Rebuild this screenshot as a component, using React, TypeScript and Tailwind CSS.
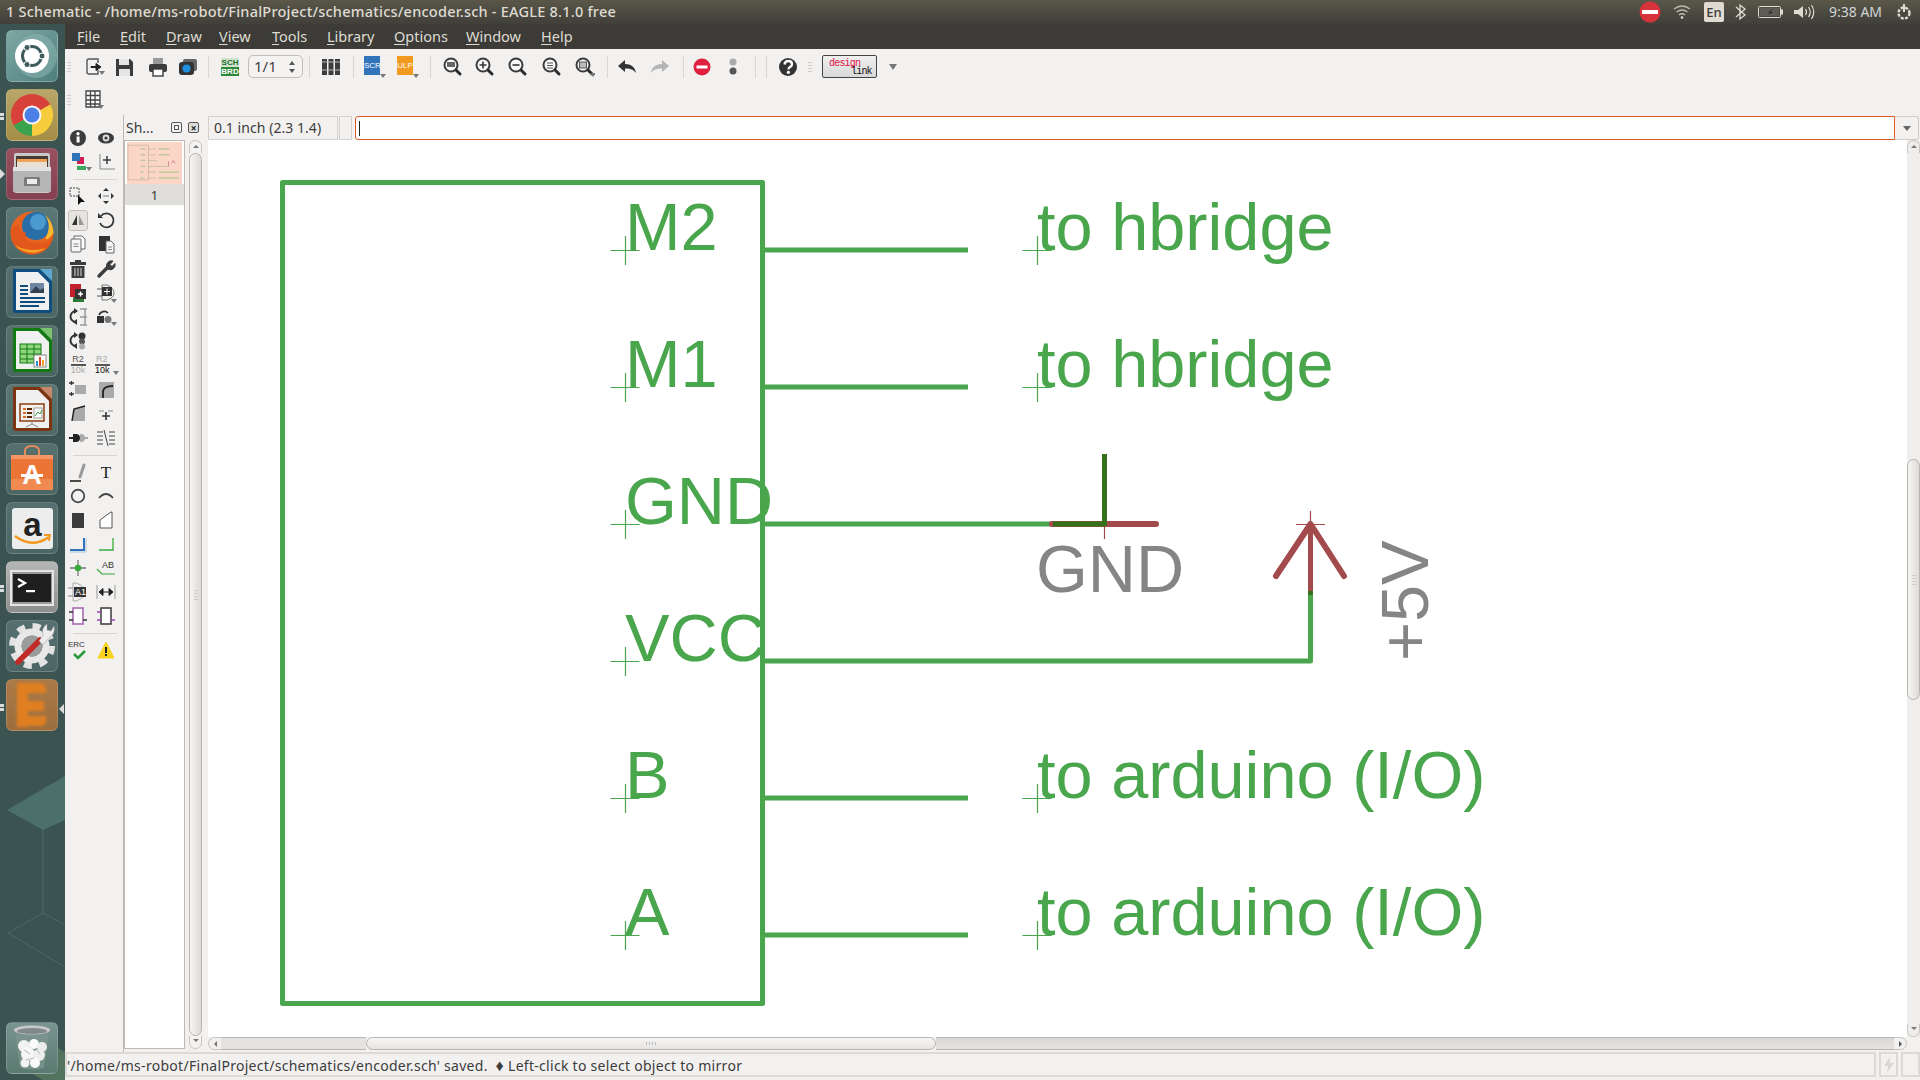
import React from "react";

const FONT = "font-['Noto_Sans','Open_Sans',sans-serif]";

function Tile({ c, children }: { c: string; children?: React.ReactNode }) {
  return (
    <div className={`relative z-10 w-[52px] h-[52px] shrink-0 rounded-[6px] border border-white/15 overflow-hidden ${c}`}>
      <svg viewBox="0 0 52 52" className="absolute -left-px -top-px w-[52px] h-[52px]">
        {children}
      </svg>
    </div>
  );
}

function Notch({ c }: { c: string }) {
  return (
    <div className={`absolute left-0 flex flex-col gap-[1px] ${c}`}>
      <div className="w-[4px] h-[3px] bg-[#dcdcdc]" />
      <div className="w-[4px] h-[3px] bg-[#dcdcdc]" />
    </div>
  );
}

function Launcher() {
  return (
    <div className="relative w-[65px] shrink-0 flex flex-col items-start gap-[7px] pl-[6px] pt-[6px] pb-[6px] bg-[#3b5452] overflow-hidden">
      <svg viewBox="0 0 65 1056" className="absolute left-0 top-0 w-[65px] h-[1056px]">
        <polygon points="7,786 43,806 65,796 65,752" fill="#4a7069" />
        <path d="M43 806V889M8 909L43 889L65 901M8 909L65 943" stroke="#4a6b64" fill="none" strokeWidth="1" />
        <polygon points="8,1036 43,1016 65,1028 65,1056 43,1056" fill="#52745f" />
      </svg>
      <div className="absolute left-0 top-[145px] w-0 h-0 border-y-[5px] border-y-transparent border-l-[5px] border-l-[#dcdcdc]" />
      <Tile c="bg-linear-to-br from-[#7fa8a6] to-[#4d7f7d]">
        <ellipse cx="30" cy="26" rx="21" ry="22" fill="#8fb8b6" opacity=".5" />
        <circle cx="26" cy="26" r="17" fill="#fff" />
        <circle cx="26" cy="26" r="9.5" fill="none" stroke="#3d5c5c" strokeWidth="3" />
        <circle cx="36" cy="26" r="3" fill="#3d5c5c" stroke="#fff" />
        <circle cx="21" cy="17.5" r="3" fill="#3d5c5c" stroke="#fff" />
        <circle cx="21" cy="34.5" r="3" fill="#3d5c5c" stroke="#fff" />
      </Tile>
      <Tile c="bg-linear-to-b from-[#b9a66a] to-[#a48e45]">
        <path d="M26 26L7.8 36.5A21 21 0 0 1 44.2 15.5Z" fill="#d7413a" />
        <path d="M26 26L44.2 15.5A21 21 0 0 1 26 47Z" fill="#f7cc3c" />
        <path d="M26 26L26 47A21 21 0 0 1 7.8 36.5Z" fill="#3aa34e" />
        <circle cx="26" cy="26" r="9.5" fill="#f5f5f5" />
        <circle cx="26" cy="26" r="7.5" fill="#4a80e8" />
      </Tile>
      <Tile c="bg-linear-to-b from-[#98505f] to-[#85404f]">
        <rect x="8" y="5" width="36" height="40" rx="2" fill="#c9c9c9" />
        <rect x="10" y="8" width="32" height="11" fill="#4a3a34" />
        <rect x="11" y="11" width="30" height="3" fill="#f2a35a" />
        <rect x="11" y="14" width="30" height="5" fill="#e8e0d0" />
        <rect x="7" y="19" width="38" height="25" rx="1" fill="#b5b5b5" />
        <rect x="7" y="19" width="38" height="4" fill="#e2e2e2" />
        <rect x="18" y="29" width="16" height="9" rx="1" fill="#7b7b7b" />
        <rect x="21" y="31" width="10" height="5" fill="#ececec" />
      </Tile>
      <Tile c="bg-linear-to-b from-[#5b7776] to-[#4d6867]">
        <circle cx="26" cy="26" r="21.5" fill="#e8651f" />
        <circle cx="30" cy="19" r="14" fill="#2a6ea8" />
        <circle cx="32" cy="15" r="8" fill="#4a9ad0" />
        <path d="M5 24C4 36 14 48 27 47.5C39 47 47 38 47.5 26C46 34 39 37 33 36C24 36 17 32 20 25C15 27 12 22 14 17C10 18 6 20 5 24Z" fill="#e2571b" />
        <path d="M47.5 26C47 18 44 12 39 8C43 14 44 20 41 28C37 34 42 34 47.5 26Z" fill="#f7b92f" />
        <path d="M9 38C16 46 30 49 40 41C30 44 18 44 9 38Z" fill="#f6a623" />
      </Tile>
      <Tile c="bg-linear-to-b from-[#55706f] to-[#4a6665]">
        <path d="M7 3H34L46 15V44Q46 47 43 47H10Q7 47 7 44Z" fill="#0f4d7d" />
        <path d="M34 3H46V15Z" fill="#5da6cf" />
        <path d="M10 6H32L43 17V44H10Z" fill="#f0f0f0" />
        <rect x="14" y="19" width="8" height="2" fill="#0f4d7d" />
        <rect x="14" y="23" width="8" height="2" fill="#0f4d7d" />
        <rect x="14" y="27" width="8" height="2" fill="#0f4d7d" />
        <rect x="24" y="17" width="14" height="10" fill="#6f86a5" />
        <path d="M24 27L30 20L34 24L38 22V27Z" fill="#33424f" />
        <rect x="14" y="31" width="25" height="2" fill="#0f4d7d" />
        <rect x="14" y="35" width="25" height="2" fill="#0f4d7d" />
        <rect x="14" y="39" width="19" height="2" fill="#0f4d7d" />
      </Tile>
      <Tile c="bg-linear-to-b from-[#56726d] to-[#4a6660]">
        <path d="M7 3H34L46 15V44Q46 47 43 47H10Q7 47 7 44Z" fill="#127a12" />
        <path d="M34 3H46V15Z" fill="#7cc36f" />
        <path d="M10 6H32L43 17V44H10Z" fill="#f0f0f0" />
        <rect x="14" y="19" width="21" height="19" fill="#8fd67e" stroke="#127a12" />
        <path d="M14 24H35M14 29H35M14 34H35M21 19V38M28 19V38" stroke="#127a12" fill="none" />
        <rect x="28" y="30" width="12" height="12" fill="#fff" stroke="#888" />
        <rect x="30" y="36" width="2" height="5" fill="#2a8fd6" />
        <rect x="33" y="32" width="2" height="9" fill="#d64a2a" />
        <rect x="36" y="35" width="2" height="6" fill="#f2a32a" />
      </Tile>
      <Tile c="bg-linear-to-b from-[#5b7672] to-[#4e6b67]">
        <path d="M7 3H34L46 15V44Q46 47 43 47H10Q7 47 7 44Z" fill="#7c3411" />
        <path d="M34 3H46V15Z" fill="#c7876a" />
        <path d="M10 6H32L43 17V44H10Z" fill="#f0f0f0" />
        <rect x="14" y="20" width="24" height="17" fill="#f5f0e8" stroke="#8a3d14" strokeWidth="1.5" />
        <rect x="17" y="24" width="3" height="2" fill="#d8692a" />
        <rect x="17" y="28" width="3" height="2" fill="#d8692a" />
        <rect x="17" y="32" width="3" height="2" fill="#d8692a" />
        <rect x="21" y="24" width="5" height="2" fill="#5a2a10" />
        <rect x="21" y="28" width="5" height="2" fill="#5a2a10" />
        <rect x="21" y="32" width="5" height="2" fill="#5a2a10" />
        <rect x="28" y="24" width="8" height="10" fill="#fff" stroke="#777" strokeWidth=".7" />
        <path d="M29 32L32 28L34 30L36 26" stroke="#3a9a3a" fill="none" />
        <path d="M26 37V40M26 40L20 43M26 40L32 43" stroke="#888" fill="none" />
      </Tile>
      <Tile c="bg-linear-to-b from-[#56706e] to-[#4c6664]">
        <path d="M19 12V8Q19 3 26 3Q33 3 33 8V12" stroke="#e88a5a" strokeWidth="2" fill="none" />
        <path d="M5 12H47V47H5Z" fill="#ec7434" />
        <path d="M5 12H47V16H5Z" fill="#f59665" />
        <rect x="5" y="36" width="42" height="11" fill="#f08a50" />
        <text x="26" y="41" textAnchor="middle" fontSize="27" fontWeight="700" fontFamily="'Liberation Sans',sans-serif" fill="#fff">A</text>
        <rect x="15" y="31" width="22" height="3" fill="#fff" />
      </Tile>
      <Tile c="bg-linear-to-b from-[#56706f] to-[#4b6665]">
        <rect x="6" y="6" width="41" height="41" rx="3" fill="#ededed" />
        <text x="26.5" y="34" textAnchor="middle" fontSize="33" fontWeight="700" fontFamily="'Liberation Sans',sans-serif" fill="#222">a</text>
        <path d="M9 34Q26 47 43 35" stroke="#f29a1f" strokeWidth="2.6" fill="none" />
        <path d="M38 33L44 33L43 39" stroke="#f29a1f" strokeWidth="1.8" fill="none" />
      </Tile>
      <Tile c="bg-linear-to-b from-[#b5b7b6] to-[#8d8f8e]">
        <rect x="4" y="9" width="44" height="36" fill="#e5e5e5" />
        <rect x="6" y="11" width="40" height="32" fill="#9a9a9a" />
        <rect x="7" y="13" width="38" height="28" fill="#1f1f1f" />
        <path d="M12 18L19 22L12 26" stroke="#fff" strokeWidth="2.2" fill="none" />
        <rect x="20" y="29" width="9" height="2.2" fill="#fff" />
      </Tile>
      <Tile c="bg-linear-to-b from-[#56706f] to-[#4b6665]">
        <circle cx="26" cy="26" r="20" fill="none" stroke="#e2e2e2" strokeWidth="6" strokeDasharray="8 7.7" />
        <circle cx="26" cy="26" r="14" fill="none" stroke="#e8e8e8" strokeWidth="7" />
        <circle cx="26" cy="26" r="10.5" fill="#9a9c9b" />
        <path d="M12 42L34 20" stroke="#c22a2a" strokeWidth="5.5" strokeLinecap="round" />
        <path d="M33 21L37 15Q35 8 41 4L41 10L45 11L48 6Q50 14 42 19L37 25Z" fill="#ececec" stroke="#999" strokeWidth=".5" />
      </Tile>
      <Tile c="bg-linear-to-b from-[#ab7a47] to-[#9c6e3d]">
        <g className="blur-[1.5px]" fill="#e07f22">
          <rect x="11" y="4" width="11" height="44" />
          <path d="M11 4H34Q40 4 40 11V14H11Z" />
          <rect x="21" y="22" width="17" height="10" />
          <path d="M11 37H40V42Q40 47 34 47H11Z" />
        </g>
      </Tile>
      <div className="absolute left-[59px] top-[680px] w-0 h-0 border-y-[5px] border-y-transparent border-r-[5px] border-r-[#dcdcdc]" />
      <Notch c="top-[89px]" />
      <Notch c="top-[561px]" />
      <Notch c="top-[680px]" />
      <div className="mt-auto">
        <Tile c="bg-linear-to-b from-[#7a9490] to-[#5a7a70]">
          <path d="M9 9L14 46Q26 49 38 46L43 9Z" fill="#7f9591" opacity=".7" />
          <ellipse cx="26" cy="8" rx="18" ry="4.5" fill="#c8c8c8" />
          <ellipse cx="26" cy="9" rx="15" ry="3" fill="#808a88" />
          <circle cx="18" cy="24" r="6" fill="#f2f2f2" />
          <circle cx="28" cy="22" r="5" fill="#fafafa" />
          <circle cx="36" cy="25" r="5" fill="#ececec" />
          <circle cx="22" cy="32" r="7" fill="#f6f6f6" />
          <circle cx="33" cy="33" r="6" fill="#eee" />
          <circle cx="19" cy="41" r="4.5" fill="#f2f2f2" />
          <circle cx="29" cy="41" r="5" fill="#fafafa" />
          <path d="M18 28L24 32M30 26L34 32M20 38L28 36" stroke="#b5b5b5" fill="none" />
        </Tile>
      </div>
    </div>
  );
}

function Ic({ c = "", w = 22, h = 22, children }: { c?: string; w?: number; h?: number; children?: React.ReactNode }) {
  return (
    <svg viewBox={`0 0 ${w} ${h}`} width={w} height={h} className={`shrink-0 ${c}`}>
      {children}
    </svg>
  );
}

const Tri = ({ x = 16, y = 17 }: { x?: number; y?: number }) => <path d={`M${x} ${y}h6l-3 4z`} fill="#777" />;

function Grip({ c = "" }: { c?: string }) {
  return (
    <div className={`w-[4px] shrink-0 flex flex-col gap-[2px] ${c}`}>
      <div className="h-px bg-[#cfcdca]" />
      <div className="h-px bg-[#cfcdca]" />
      <div className="h-px bg-[#cfcdca]" />
      <div className="h-px bg-[#cfcdca]" />
    </div>
  );
}

function Sep({ c = "" }: { c?: string }) {
  return <div className={`w-px h-[22px] shrink-0 bg-[#d8d6d3] ${c}`} />;
}

function Zoom({ c = "", mark, tri }: { c?: string; mark: React.ReactNode; tri?: boolean }) {
  return (
    <Ic c={c}>
      <circle cx="10" cy="9" r="6.5" fill="#f8f8f8" stroke="#3c3c3c" strokeWidth="2" />
      <path d="M15 14l4 4" stroke="#2b2b2b" strokeWidth="3" strokeLinecap="round" />
      {mark}
      {tri && <path d="M17 17h6l-3 4z" fill="#777" />}
    </Ic>
  );
}

function Toolbar() {
  return (
    <div className="h-[35px] shrink-0 flex items-center pl-[2px]">
      <Grip />
      <Ic c="ml-[13px]">
        <path d="M5 3H14V7M5 3Q3 3 3 5V16Q3 18 5 18H14V14" stroke="#555" fill="none" strokeWidth="1.4" />
        <path d="M7 10.5H12V7.5L17 11L12 14.5V11.5H7Z" fill="#222" stroke="#222" />
        <Tri x={15} y={15} />
      </Ic>
      <Ic c="ml-[7px]">
        <path d="M3 3H17L20 6V20H3Z" fill="#3c3c3c" />
        <rect x="6" y="3" width="10" height="6" fill="#e5e5e5" />
        <rect x="6" y="13" width="11" height="7" fill="#e5e5e5" />
      </Ic>
      <Ic c="ml-[12px]">
        <rect x="6" y="2" width="10" height="6" fill="#999" />
        <rect x="2" y="8" width="18" height="8" rx="2" fill="#3c3c3c" />
        <rect x="6" y="13" width="10" height="7" fill="#fff" stroke="#3c3c3c" strokeWidth="1.4" />
      </Ic>
      <Ic c="ml-[8px]">
        <rect x="6" y="3" width="14" height="12" rx="2" fill="#666" />
        <rect x="2" y="6" width="15" height="13" rx="3" fill="#333" />
        <circle cx="9.5" cy="12.5" r="4" fill="#1f8fe0" />
      </Ic>
      <Sep c="ml-[9px]" />
      <div className="ml-[10px] w-[22px] h-[22px] shrink-0 flex flex-col items-center justify-center">
        <div className="w-[18px] h-[9px] bg-[#cfe3cf] text-[8px] leading-[9px] text-center font-bold text-[#1c6e2a] font-['Liberation_Sans',sans-serif]">SCH</div>
        <div className="w-[18px] h-[9px] bg-[#2d8a3a] text-[8px] leading-[9px] text-center font-bold text-white font-['Liberation_Sans',sans-serif]">BRD</div>
      </div>
      <div className="ml-[7px] w-[55px] h-[23px] shrink-0 relative rounded-[5px] border border-[#c2bfba] bg-[#f4f3f2] text-[15px] leading-[21px] pl-[5px] text-[#444]">
        1/1
        <span className="absolute right-[7px] top-[5px] border-x-[3px] border-x-transparent border-b-[4px] border-b-[#555]" />
        <span className="absolute right-[7px] bottom-[4px] border-x-[3px] border-x-transparent border-t-[4px] border-t-[#555]" />
      </div>
      <Sep c="ml-[6px]" />
      <Ic c="ml-[10px]">
        <rect x="2" y="3" width="5" height="16" fill="#3c3c3c" />
        <rect x="8.5" y="3" width="5" height="16" fill="#3c3c3c" />
        <rect x="15" y="3" width="5" height="16" fill="#3c3c3c" />
        <path d="M2 6h18M2 14h18" stroke="#bbb" />
      </Ic>
      <Sep c="ml-[11px]" />
      <div className="ml-[10px] relative w-[22px] h-[22px] shrink-0">
        <div className="w-[16px] h-[19px] bg-[#3274ba] text-[8px] leading-[19px] text-white text-center font-['Liberation_Sans',sans-serif]">SCR</div>
        <span className="absolute right-0 bottom-0 border-x-[3px] border-x-transparent border-t-[4px] border-t-[#777]" />
      </div>
      <div className="ml-[11px] relative w-[22px] h-[22px] shrink-0">
        <div className="w-[16px] h-[19px] bg-[#f29a1f] text-[8px] leading-[19px] text-white text-center font-['Liberation_Sans',sans-serif]">ULP</div>
        <span className="absolute right-0 bottom-0 border-x-[3px] border-x-transparent border-t-[4px] border-t-[#777]" />
      </div>
      <Sep c="ml-[11px]" />
      <Zoom c="ml-[10px]" mark={<rect x="6" y="6" width="8" height="5" fill="#666" />} />
      <Zoom c="ml-[10px]" mark={<path d="M6.5 9h7M10 5.5v7" stroke="#333" strokeWidth="1.6" />} />
      <Zoom c="ml-[11px]" mark={<path d="M6.5 9h7" stroke="#333" strokeWidth="1.6" />} />
      <Zoom c="ml-[12px]" mark={<path d="M7 7h6M7 9.5h6M7 12h6" stroke="#555" strokeWidth="1.1" />} />
      <Zoom c="ml-[11px]" tri mark={<rect x="6.5" y="6" width="7" height="6" fill="#bbb" stroke="#555" />} />
      <Sep c="ml-[12px]" />
      <Ic c="ml-[8px]">
        <path d="M2 10L9 4V8C15 8 19 11 20 17C17 13 13 12.5 9 12.5V16Z" fill="#333" />
      </Ic>
      <Ic c="ml-[11px]">
        <path d="M20 10L13 4V8C7 8 3 11 2 17C5 13 9 12.5 13 12.5V16Z" fill="#b5b5b5" />
      </Ic>
      <Sep c="ml-[12px]" />
      <Ic c="ml-[7px]">
        <circle cx="11" cy="11" r="8.5" fill="#e0203f" />
        <rect x="5.5" y="9.5" width="11" height="3" fill="#fff" />
      </Ic>
      <Ic c="ml-[9px]">
        <circle cx="11" cy="6" r="3.5" fill="#aaa" />
        <circle cx="11" cy="15" r="3.5" fill="#555" />
      </Ic>
      <Sep c="ml-[11px]" />
      <Sep c="ml-[10px]" />
      <Ic c="ml-[10px]">
        <circle cx="11" cy="11" r="9" fill="#333" />
        <path d="M7.5 8.5Q8 5 11.3 5Q15 5 15 8.2Q15 10 12.6 11.2Q11.5 11.8 11.5 13.5" stroke="#fff" strokeWidth="2.4" fill="none" />
        <circle cx="11.4" cy="16.3" r="1.6" fill="#fff" />
      </Ic>
      <Grip c="ml-[9px]" />
      <div className="ml-[10px] relative w-[55px] h-[23px] shrink-0 rounded-[2px] border border-[#444] bg-linear-to-b from-[#f0f0f0] to-[#d8d8d8] font-['Liberation_Mono',monospace] text-[10px] leading-none">
        <span className="absolute left-[6px] top-[3px] text-[#e0103f] tracking-[-0.8px]">design</span>
        <span className="absolute left-[28px] top-[11px] text-[#111] tracking-[-0.8px]">link</span>
      </div>
      <div className="ml-[12px] w-0 h-0 border-x-[4px] border-x-transparent border-t-[6px] border-t-[#777]" />
    </div>
  );
}

function Tool({ children }: { children?: React.ReactNode }) {
  return <div className="flex items-center justify-center h-full">{children}</div>;
}

function ToolSep() {
  return <div className="w-[44px] h-px bg-[#d8d6d3] ml-[8px] my-[4.5px]" />;
}

function LeftTools() {
  const D = "#3c3c3c";
  return (
    <div className="w-[59px] shrink-0 flex flex-col border-r border-[#bdb9b4] pt-[11px]">
      <div className="grid grid-cols-[26px_26px] gap-x-[2px] auto-rows-[24px]">
        <Tool>
          <Ic>
            <circle cx="11" cy="11" r="8" fill={D} />
            <rect x="9.6" y="9.5" width="3" height="6" fill="#fff" />
            <circle cx="11" cy="6.8" r="1.7" fill="#fff" />
          </Ic>
        </Tool>
        <Tool>
          <Ic>
            <ellipse cx="11" cy="11" rx="8" ry="5.6" fill={D} />
            <circle cx="11" cy="11" r="3.4" fill="#ddd" />
            <circle cx="11" cy="11" r="1.6" fill={D} />
          </Ic>
        </Tool>
        <Tool>
          <Ic c="translate-x-[4px]">
            <rect x="1" y="2" width="8" height="8" fill="#2f74b8" />
            <path d="M9 6H13V13H6V10H9Z" fill="#d21f52" />
            <path d="M6 15H15V19H6Z" fill="#3aa85a" />
            <Tri x={15} y={16} />
          </Ic>
        </Tool>
        <Tool>
          <Ic>
            <path d="M5 3V18H20" stroke="#888" fill="none" />
            <path d="M8 9H16M12 5V13" stroke={D} strokeWidth="1.5" />
          </Ic>
        </Tool>
      </div>
      <ToolSep />
      <div className="grid grid-cols-[26px_26px] gap-x-[2px] auto-rows-[24.2px]">
        <Tool>
          <Ic>
            <rect x="3" y="3" width="9" height="8" fill="none" stroke="#444" strokeDasharray="2 1" />
            <path d="M11 10L11 20L14 17L18 17Z" fill="#111" />
          </Ic>
        </Tool>
        <Tool>
          <Ic>
            <path d="M11 3l3 3h-6zM11 19l3-3h-6zM3 11l3-3v6zM19 11l-3-3v6z" fill="#333" />
            <path d="M8 11h6" stroke="#777" />
          </Ic>
        </Tool>
        <div className="flex items-center justify-center h-full">
          <div className="w-[20px] h-[21px] flex items-center justify-center rounded-[3px] border border-[#c2bfba] bg-[#e6e4e1]">
            <Ic w={16} h={16}>
              <path d="M7 3V13H2Z" fill="#333" />
              <path d="M9 3V13H14Z" fill="#999" />
            </Ic>
          </div>
        </div>
        <Tool>
          <Ic>
            <path d="M6 7A7 7 0 1 1 5 14" stroke="#333" strokeWidth="1.8" fill="none" />
            <path d="M3 4V9H8Z" fill="#333" />
          </Ic>
        </Tool>
        <Tool>
          <Ic>
            <path d="M7 3H15L18 6V16H7Z" fill="#fff" stroke="#666" />
            <rect x="4" y="6" width="10" height="13" rx="1" fill="#f6f6f6" stroke="#666" />
            <path d="M6.5 11H11.5M6.5 13.5H11.5" stroke="#888" />
          </Ic>
        </Tool>
        <Tool>
          <Ic>
            <path d="M4 3H15V9H12V18H4Z" fill="#333" />
            <path d="M11 8H16L19 11V20H11Z" fill="#f4f4f4" stroke="#666" />
            <path d="M13 14H17M13 16.5H17" stroke="#888" />
          </Ic>
        </Tool>
        <Tool>
          <Ic>
            <rect x="8" y="2" width="6" height="3" fill={D} />
            <rect x="3" y="4" width="16" height="3" fill={D} />
            <path d="M4.5 8H17.5V20H4.5Z" fill={D} />
            <path d="M8 10V18M11 10V18M14 10V18" stroke="#ddd" />
          </Ic>
        </Tool>
        <Tool>
          <Ic>
            <path d="M4 18L13 9" stroke={D} strokeWidth="3.4" strokeLinecap="round" />
            <path d="M12 10A5 5 0 0 1 18 3L15 6.5L17 8.5L20 5.5A5 5 0 0 1 13.5 11.5Z" fill={D} stroke={D} />
          </Ic>
        </Tool>
        <Tool>
          <Ic>
            <rect x="3" y="2" width="11" height="13" fill="#c2202f" />
            <rect x="6" y="15" width="11" height="5" fill="#2c7a35" />
            <rect x="8" y="7" width="11" height="10" fill="#333" />
            <path d="M11 12H16M13.5 9.5V14.5" stroke="#fff" strokeWidth="1.5" />
          </Ic>
        </Tool>
        <Tool>
          <Ic>
            <path d="M7 3H12Q19 6 19 11Q19 16 12 18H7Z" fill="none" stroke="#777" />
            <path d="M2 7H7M2 14H7" stroke="#555" />
            <rect x="7" y="5" width="10" height="9" fill="#333" />
            <path d="M9 9.5H15M12 6.5V12.5" stroke="#fff" />
            <Tri x={16} y={17} />
          </Ic>
        </Tool>
        <Tool>
          <Ic>
            <path d="M9 5A5.5 5.5 0 0 0 9 16" stroke="#333" strokeWidth="2" fill="none" />
            <path d="M7 2L11 5L7 8ZM10 13L6 16L10 19Z" fill="#333" />
            <path d="M13 3H20M13 11H20M13 19H20M18 3V19" stroke="#999" strokeWidth="1.5" fill="none" />
          </Ic>
        </Tool>
        <Tool>
          <Ic>
            <rect x="2" y="10" width="7" height="7" fill="#333" />
            <circle cx="13" cy="13.5" r="3.5" fill="#777" />
            <path d="M4 9A5.5 5.5 0 0 1 13 7" stroke="#333" strokeWidth="1.7" fill="none" />
            <Tri x={16} y={16} />
          </Ic>
        </Tool>
        <Tool>
          <Ic>
            <path d="M9 5A5.5 5.5 0 0 0 9 16" stroke="#333" strokeWidth="2" fill="none" />
            <path d="M7 2L11 5L7 8ZM10 13L6 16L10 19Z" fill="#333" />
            <circle cx="15" cy="6" r="3.5" fill="#333" />
            <circle cx="15" cy="11.5" r="3" fill="#555" />
            <circle cx="15" cy="16.5" r="3" fill="#aaa" />
          </Ic>
        </Tool>
        <Tool />
        <Tool>
          <div className="w-[17px] flex flex-col items-center font-['Liberation_Sans',sans-serif] text-[9px] leading-[9px] text-[#555]">
            <span>R2</span>
            <div className="w-[15px] h-[2px] bg-[#555]" />
            <span className="text-[#aaa]">10k</span>
          </div>
        </Tool>
        <Tool>
          <div className="relative w-[22px] flex flex-col items-start font-['Liberation_Sans',sans-serif] text-[9px] leading-[9px]">
            <span className="text-[#aaa] pl-[1px]">R2</span>
            <div className="w-[15px] h-[2px] bg-[#555]" />
            <span className="text-[#111]">10k</span>
            <span className="absolute right-[-2px] bottom-0 border-x-[3px] border-x-transparent border-t-[4px] border-t-[#777]" />
          </div>
        </Tool>
        <Tool>
          <Ic>
            <path d="M2 4H7M4.5 2V6M2 15H7M4.5 13V17" stroke="#333" strokeWidth="1.3" />
            <rect x="8" y="6" width="11" height="9" fill="#aaa" />
          </Ic>
        </Tool>
        <Tool>
          <Ic>
            <rect x="4" y="3" width="15" height="16" fill="#aaa" />
            <path d="M8 19V13Q8 7 18 7" stroke="#222" strokeWidth="1.8" fill="none" />
          </Ic>
        </Tool>
        <Tool>
          <Ic>
            <path d="M5 18L7 6L18 3V18Z" fill="#aaa" />
            <path d="M5 18L7 6L18 3" stroke="#222" strokeWidth="1.5" fill="none" />
          </Ic>
        </Tool>
        <Tool>
          <Ic>
            <path d="M4 8H9M13 8H18" stroke="#888" />
            <path d="M7 13H15M11 9V17" stroke="#333" strokeWidth="1.6" />
          </Ic>
        </Tool>
        <Tool>
          <Ic>
            <path d="M2 11H7" stroke="#222" strokeWidth="2" />
            <path d="M6 7H9A4 4 0 0 1 9 15H6Z" fill="#222" />
            <path d="M13 7H14A4 4 0 0 1 14 15H13Z" fill="#aaa" />
            <path d="M18 11H21" stroke="#aaa" strokeWidth="2" />
          </Ic>
        </Tool>
        <Tool>
          <Ic>
            <path d="M2 5H8M2 9H8M2 13H8M2 17H8M14 5H20M14 9H20M14 13H20M14 17H20" stroke="#444" />
            <path d="M9 3L13 19" stroke="#444" />
          </Ic>
        </Tool>
      </div>
      <ToolSep />
      <div className="grid grid-cols-[26px_26px] gap-x-[2px] auto-rows-[24px]">
        <Tool>
          <Ic>
            <path d="M3 20H14" stroke="#111" strokeWidth="1.5" />
            <path d="M13 16L17 4" stroke="#999" strokeWidth="3" strokeLinecap="round" />
          </Ic>
        </Tool>
        <Tool>
          <span className="text-[17px] leading-none font-['Liberation_Serif',serif] text-[#222]">T</span>
        </Tool>
        <Tool>
          <Ic>
            <circle cx="11" cy="11" r="6.3" fill="none" stroke="#444" strokeWidth="1.7" />
          </Ic>
        </Tool>
        <Tool>
          <Ic>
            <path d="M4 13Q11 5 18 13" fill="none" stroke="#444" strokeWidth="1.8" />
          </Ic>
        </Tool>
        <Tool>
          <Ic>
            <rect x="5" y="4" width="12" height="15" fill="#3c3c3c" />
          </Ic>
        </Tool>
        <Tool>
          <Ic>
            <path d="M5 19V11L16 3H17V19Z" fill="#fff" stroke="#555" />
          </Ic>
        </Tool>
        <Tool>
          <Ic>
            <path d="M3 17H17V5" stroke="#2f74b8" strokeWidth="2" fill="none" />
            <path d="M3 19H19V5" stroke="#a8c4e0" fill="none" />
          </Ic>
        </Tool>
        <Tool>
          <Ic>
            <path d="M4 17H18V5" stroke="#3aa83a" strokeWidth="1.3" fill="none" />
          </Ic>
        </Tool>
        <Tool>
          <Ic>
            <path d="M3 11H19M11 3V19" stroke="#777" strokeWidth="1.3" />
            <circle cx="11" cy="11" r="3.3" fill="#3aa83a" />
          </Ic>
        </Tool>
        <Tool>
          <div className="relative w-[22px] h-[22px]">
            <span className="absolute left-[7px] top-[2px] text-[9px] leading-[12px] font-['Liberation_Sans',sans-serif] text-[#333]">AB</span>
            <svg viewBox="0 0 22 22" className="absolute inset-0 w-[22px] h-[22px]">
              <path d="M2 12L7 17H20" stroke="#3aa83a" fill="none" strokeWidth="1.2" />
            </svg>
          </div>
        </Tool>
        <Tool>
          <div className="relative w-[22px] h-[22px]">
            <svg viewBox="0 0 22 22" className="absolute inset-0 w-[22px] h-[22px]">
              <path d="M6 2H9Q18 5 18 11Q18 17 9 20H6Z" fill="none" stroke="#aaa" />
              <path d="M1 7H6M1 15H6" stroke="#888" />
              <rect x="7" y="6" width="12" height="10" fill="#333" />
            </svg>
            <span className="absolute left-[8px] top-[6px] text-[9px] leading-[10px] font-['Liberation_Sans',sans-serif] text-white">A1</span>
          </div>
        </Tool>
        <Tool>
          <Ic>
            <path d="M2 4V18M20 4V18" stroke="#999" />
            <path d="M4 11H18M4 11l4-3.5v7zM18 11l-4-3.5v7z" fill="#222" stroke="#222" strokeWidth="1" />
          </Ic>
        </Tool>
        <Tool>
          <Ic>
            <rect x="6" y="3" width="10" height="16" fill="#fff" stroke="#a56cb0" strokeWidth="1.6" />
            <path d="M2 7H6M2 15H6M16 15H20" stroke="#333" strokeWidth="1.5" />
          </Ic>
        </Tool>
        <Tool>
          <Ic>
            <rect x="6" y="3" width="10" height="16" fill="#fff" stroke="#444" strokeWidth="1.6" />
            <path d="M2 7H6M2 15H6M16 15H20" stroke="#a040b0" strokeWidth="1.5" />
          </Ic>
        </Tool>
      </div>
      <ToolSep />
      <div className="grid grid-cols-[26px_26px] gap-x-[2px] auto-rows-[24px]">
        <Tool>
          <div className="relative w-[22px] h-[22px]">
            <span className="absolute left-[1px] top-[1px] text-[8px] leading-[10px] font-['Liberation_Sans',sans-serif] text-[#333]">ERC</span>
            <svg viewBox="0 0 22 22" className="absolute inset-0 w-[22px] h-[22px]">
              <path d="M7 15L11 19L18 12" stroke="#2c9a3a" strokeWidth="2.6" fill="none" />
            </svg>
          </div>
        </Tool>
        <Tool>
          <Ic>
            <path d="M11 3L19 19H3Z" fill="#f7d21f" stroke="#f7d21f" strokeLinejoin="round" />
            <rect x="10" y="8" width="2" height="6" fill="#222" />
            <rect x="10" y="15" width="2" height="2" fill="#222" />
          </Ic>
        </Tool>
      </div>
    </div>
  );
}

function VScroll({ c = "" }: { c?: string }) {
  return (
    <div className={`shrink-0 w-[13px] flex flex-col ${c}`}>
      <div className="h-[13px] shrink-0 rounded-t-full border border-b-0 border-[#c9c6c2] bg-[#f4f3f2] flex justify-center pt-[4px]">
        <div className="w-0 h-0 border-x-[3px] border-x-transparent border-b-[3px] border-b-[#777]" />
      </div>
      <div className="flex-1 rounded-[7px] border border-[#b8b5b0] bg-linear-to-r from-[#f7f6f5] via-[#e9e8e6] to-[#dcdbd8] flex items-center justify-center">
        <Grip />
      </div>
      <div className="h-[13px] shrink-0 rounded-b-full border border-t-0 border-[#c9c6c2] bg-[#f4f3f2] flex justify-center pt-[3px]">
        <div className="w-0 h-0 border-x-[3px] border-x-transparent border-t-[3px] border-t-[#777]" />
      </div>
    </div>
  );
}

function SheetsPanel() {
  return (
    <div className="w-[83px] shrink-0 flex flex-col">
      <div className="h-[25px] shrink-0 flex items-center text-[14px] text-[#3c3c3c] pl-[2px]">
        <span className="w-[45px]">Sh...</span>
        <div className="w-[11px] h-[11px] border border-[#555] rounded-[2px] flex items-center justify-center">
          <div className="w-[5px] h-[5px] border border-[#555]" />
        </div>
        <div className="ml-[6px] w-[11px] h-[11px] border border-[#555] rounded-[2px] bg-[#ddd] flex items-center justify-center text-[10px] leading-none font-bold text-[#222]">×</div>
      </div>
      <div className="flex-1 flex pb-[3px]">
        <div className="w-[61px] border border-[#bdb9b4] bg-white flex flex-col">
          <div className="h-[43px] bg-white px-[2px] pt-[1px]">
            <div className="h-[42px] bg-[#fbd6c7]">
              <svg viewBox="0 0 57 41" className="w-full h-full">
                <rect x="1" y="2" width="21" height="36" fill="none" stroke="#b8ac8c" strokeWidth=".6" />
                <path d="M22 6H30M22 12H30M22 18H31M22 24H43M22 30H30M22 36H30" stroke="#a9b48c" strokeWidth=".6" />
                <path d="M33 6H44M33 12H44M33 30H54M33 36H54M14 6H19M14 12H19M14 18H19M14 24H19M14 30H17M14 36H17" stroke="#a9c08c" strokeWidth="1.5" opacity=".7" />
                <path d="M43 24V19M48 18l-2 3M48 18l2 3" stroke="#c2607a" strokeWidth=".7" />
              </svg>
            </div>
          </div>
          <div className="h-[21px] bg-[#dfdedb] text-[13px] leading-[23px] text-center text-[#333]">1</div>
          <div className="flex-1 bg-white" />
        </div>
        <VScroll c="ml-[4px]" />
      </div>
    </div>
  );
}

const GREEN = "#49a64c";
const RED = "#a34a4c";
const DK = "#35701a";
const GRAY = "#858585";

function Label({ x, y, t }: { x: number; y: number; t: string }) {
  return (
    <g>
      <text x={x} y={y} fontSize="66.7" fill={GREEN} fontFamily="'Liberation Sans',sans-serif">{t}</text>
      <path d={`M${x - 14.5} ${y + 0.5}H${x + 14.5}M${x + 0.5} ${y - 14}V${y + 15}`} stroke={GREEN} strokeWidth="1.2" />
    </g>
  );
}

function Schematic() {
  const pins = [250, 387, 524, 661, 798, 935];
  const names = ["M2", "M1", "GND", "VCC", "B", "A"];
  return (
    <svg viewBox="208 140 1699 897" className="w-[1699px] h-[897px]">
      <rect x="282.5" y="182.5" width="480" height="821" fill="none" stroke={GREEN} strokeWidth="5" strokeLinejoin="round" />
      {pins.map((y, i) => (
        <Label key={names[i]} x={625} y={y} t={names[i]} />
      ))}
      {[0, 1, 4, 5].map((i) => (
        <path key={i} d={`M765 ${pins[i]}H968`} stroke={GREEN} strokeWidth="5" />
      ))}
      <Label x={1037} y={250} t="to hbridge" />
      <Label x={1037} y={387} t="to hbridge" />
      <Label x={1037} y={798} t="to arduino (I/O)" />
      <Label x={1037} y={935} t="to arduino (I/O)" />
      <path d="M765 524H1052" stroke={GREEN} strokeWidth="5" />
      <path d="M1052 524H1156" stroke={RED} strokeWidth="6" strokeLinecap="round" />
      <path d="M1104.5 524V539" stroke={RED} strokeWidth="1.2" />
      <path d="M1053 524H1104.5V454" stroke={DK} strokeWidth="5" fill="none" strokeLinejoin="round" />
      <text x="1036" y="592" fontSize="66.7" fill={GRAY} fontFamily="'Liberation Sans',sans-serif">GND</text>
      <path d="M765 661H1310.5V595" stroke={GREEN} strokeWidth="5" fill="none" strokeLinejoin="round" />
      <path d="M1310.5 592V524" stroke={RED} strokeWidth="5" />
      <path d="M1276 576L1310.5 524L1344 576" stroke={RED} strokeWidth="6" fill="none" strokeLinecap="round" strokeLinejoin="round" />
      <path d="M1296 524.5H1325M1310.5 511V537" stroke={RED} strokeWidth="1.2" />
      <rect x="1308" y="591" width="5" height="4" fill={DK} />
      <text transform="translate(1428,661) rotate(-90)" fontSize="66.7" fill={GRAY} fontFamily="'Liberation Sans',sans-serif">+5V</text>
    </svg>
  );
}

function Canvas() {
  return (
    <div className="flex-1 min-w-0 flex flex-col ml-px pb-[2px]">
      <div className="h-[25px] shrink-0 flex items-stretch pt-px text-[14px] text-[#3c3c3c]">
        <div className="w-[130px] border border-[#d3d1cd] leading-[22px] pl-[5px] tracking-[0.05px]">0.1 inch (2.3 1.4)</div>
        <div className="w-[13px] ml-px border border-[#d3d1cd]" />
        <div className="ml-[3px] flex-1 rounded-l-[3px] border border-[#df5a24] bg-white flex items-center pl-[3px]">
          <div className="w-px h-[15px] bg-[#222]" />
        </div>
        <div className="w-[24px] mr-px rounded-r-[3px] border border-l-0 border-[#cfccc8] flex items-center justify-center">
          <div className="w-0 h-0 border-x-[4px] border-x-transparent border-t-[5px] border-t-[#666]" />
        </div>
      </div>
      <div className="flex-1 min-h-0 flex bg-white">
        <div className="flex-1 min-w-0 overflow-hidden">
          <Schematic />
        </div>
        <div className="w-[13px] shrink-0 flex flex-col bg-[#efeeed]">
          <div className="h-[13px] shrink-0 rounded-t-full border border-b-0 border-[#c9c6c2] flex justify-center pt-[4px]">
            <div className="w-0 h-0 border-x-[3px] border-x-transparent border-b-[3px] border-b-[#777]" />
          </div>
          <div className="h-[306px] shrink-0" />
          <div className="h-[241px] shrink-0 rounded-[7px] border border-[#b8b5b0] bg-linear-to-r from-[#f7f6f5] to-[#dcdbd8] flex items-center justify-center">
            <Grip />
          </div>
          <div className="flex-1" />
          <div className="h-[13px] shrink-0 rounded-b-full border border-t-0 border-[#c9c6c2] flex justify-center pt-[3px]">
            <div className="w-0 h-0 border-x-[3px] border-x-transparent border-t-[3px] border-t-[#777]" />
          </div>
        </div>
      </div>
      <div className="h-[13px] shrink-0 flex mr-[13px]">
        <div className="w-[13px] shrink-0 border border-r-0 border-[#c9c6c2] rounded-l-full flex items-center justify-center">
          <div className="w-0 h-0 border-y-[3px] border-y-transparent border-r-[3px] border-r-[#777]" />
        </div>
        <div className="w-[145px] shrink-0 bg-[#e4e3e1] border-y border-[#b8b5b0]" />
        <div className="w-[570px] shrink-0 rounded-[7px] border border-[#b8b5b0] bg-linear-to-b from-[#f7f6f5] to-[#e5e4e2] flex items-center justify-center gap-[2px]">
          <div className="w-px h-[3px] bg-[#bbb]" />
          <div className="w-px h-[3px] bg-[#bbb]" />
          <div className="w-px h-[3px] bg-[#bbb]" />
          <div className="w-px h-[3px] bg-[#bbb]" />
        </div>
        <div className="flex-1 bg-linear-to-b from-[#d9d8d6] to-[#e4e3e1] border-y border-[#b8b5b0]" />
        <div className="w-[13px] shrink-0 border border-l-0 border-[#c9c6c2] rounded-r-full flex items-center justify-center">
          <div className="w-0 h-0 border-y-[3px] border-y-transparent border-l-[3px] border-l-[#555]" />
        </div>
      </div>
    </div>
  );
}

function StatusBar() {
  return (
    <div className="h-[28px] shrink-0 flex pb-[3px]">
      <div className="flex-1 border-2 border-[#dcdad7] text-[14px] tracking-[0.29px] leading-[23px] text-[#3c3c3c] whitespace-pre">
        '/home/ms-robot/FinalProject/schematics/encoder.sch' saved.  <span className="text-[16px] leading-none">♦</span> Left-click to select object to mirror
      </div>
      <div className="ml-[3px] w-[19px] border-2 border-[#dcdad7] flex items-center justify-center">
        <svg viewBox="0 0 12 18" className="w-[12px] h-[18px]">
          <path d="M7 1L1 10H5L4 17L11 7H7Z" fill="#dad8d5" />
        </svg>
      </div>
      <div className="ml-[3px] w-[19px] border-2 border-[#dcdad7]" />
    </div>
  );
}

function TopPanel() {
  return (
    <div className="h-[24px] shrink-0 flex items-center bg-linear-to-b from-[#5a5749] to-[#403f39] text-[#dfdbd2]">
      <div className="pl-[6px] text-[14.5px] font-medium tracking-[0.23px]">1 Schematic - /home/ms-robot/FinalProject/schematics/encoder.sch - EAGLE 8.1.0 free</div>
      <div className="flex-1" />
      <svg viewBox="0 0 320 24" className="w-[320px] h-[24px]">
        <circle cx="50" cy="12" r="10.5" fill="#d8323a" />
        <rect x="42" y="10" width="16" height="4" fill="#fff" />
        <path d="M74 9Q82 3 90 9M76.5 12Q82 8 87.5 12M79 15Q82 12.5 85 15" fill="none" stroke="#bdbab2" strokeWidth="1.3" />
        <circle cx="82" cy="17.5" r="1.3" fill="#dfdbd2" />
        <rect x="104" y="2" width="20" height="20" rx="2" fill="#dfdbd2" />
        <path d="M136 7L145 15L140 19V5L145 9L136 17" fill="none" stroke="#dfdbd2" strokeWidth="1.3" />
        <rect x="158.5" y="6.5" width="22" height="11" rx="1" fill="none" stroke="#dfdbd2" />
        <rect x="181" y="9.5" width="2" height="5" fill="#dfdbd2" />
        <path d="M160 8H179V16H160Z" fill="#5d5c55" />
        <path d="M174 8L168 12.5H171L166 16L173 12H170Z" fill="#1e1e1e" />
        <path d="M194 10H198L203 6V18L198 14H194Z" fill="#dfdbd2" />
        <path d="M205.5 9Q207.5 12 205.5 15M208.5 7Q212 12 208.5 17M211.5 5Q216 12 211.5 19" fill="none" stroke="#dfdbd2" strokeWidth="1.2" />
        <circle cx="304" cy="13" r="5.5" fill="none" stroke="#dfdbd2" strokeWidth="2.4" strokeDasharray="3 1.4" />
        <path d="M304 4V12" stroke="#dfdbd2" strokeWidth="2" />
      </svg>
      <div className="absolute right-[196px] top-[3px] w-[20px] h-[18px] text-center text-[13px] leading-[18px] font-medium text-[#3c3b37]">En</div>
      <div className="absolute left-[1829px] top-0 h-[24px] leading-[24px] text-[14px] text-[#cfd4d8]">9:38 AM</div>
    </div>
  );
}

export default function App() {
  const menu = [
    ["F", "ile", "ml-[12px] w-[43px]"],
    ["E", "dit", "w-[46px]"],
    ["D", "raw", "w-[53px]"],
    ["V", "iew", "w-[53px]"],
    ["T", "ools", "w-[55px]"],
    ["L", "ibrary", "w-[67px]"],
    ["O", "ptions", "w-[72px]"],
    ["W", "indow", "w-[75px]"],
    ["H", "elp", "w-[40px]"],
  ];
  return (
    <div className={`relative w-[1920px] h-[1080px] overflow-hidden flex flex-col bg-[#f2f1f0] ${FONT}`}>
      <TopPanel />
      <div className="flex-1 min-h-0 flex">
        <Launcher />
        <div className="flex-1 min-w-0 flex flex-col">
          <div className="h-[25px] shrink-0 bg-[#3c3b37] flex items-center text-[14.5px] text-[#dfdbd2]">
            {menu.map(([a, b, c]) => (
              <span key={a} className={c}>
                <span className="underline underline-offset-2">{a}</span>
                {b}
              </span>
            ))}
          </div>
          <Toolbar />
          <div className="h-[31px] shrink-0 flex items-center pl-[2px]">
            <Grip />
            <Ic c="ml-[11px]">
              <path d="M4 2H18V18H4ZM4 6.5H18M4 11H18M4 15H18M8.5 2V18M13 2V18" fill="#fff" stroke="#444" strokeWidth="1.3" />
              <Tri x={16} y={16} />
            </Ic>
          </div>
          <div className="flex-1 min-h-0 flex">
            <LeftTools />
            <SheetsPanel />
            <Canvas />
          </div>
          <StatusBar />
        </div>
      </div>
    </div>
  );
}
